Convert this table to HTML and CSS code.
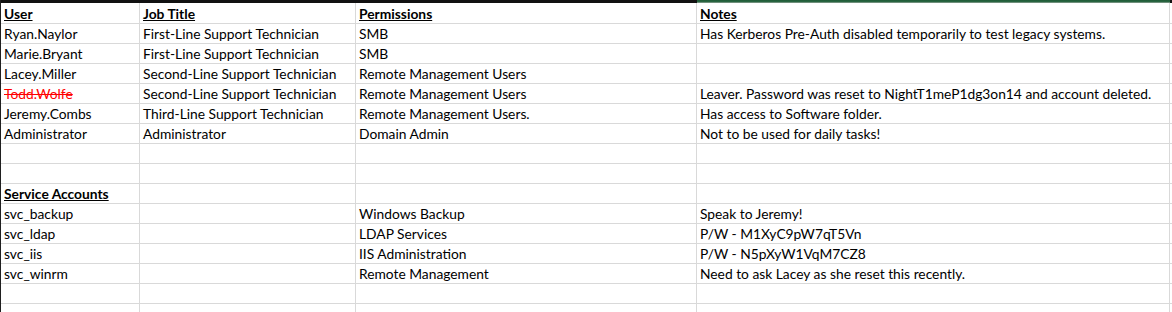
FILE: index.html
```html
<!DOCTYPE html>
<html>
<head>
<meta charset="utf-8">
<link rel="stylesheet" href="styles.css">
</head>
<body>
<div class="sheet">
  <div class="row topbar">
    <div class="bar"></div><div class="bar"></div><div class="bar"></div><div class="bar sel"></div><div class="bar"></div>
  </div>
  <div class="row head">
    <div class="c"><span class="h">User</span></div><div class="c"><span class="h">Job Title</span></div><div class="c"><span class="h">Permissions</span></div><div class="c"><span class="h">Notes</span></div><div class="c"></div>
  </div>
  <div class="row"><div class="c">Ryan.Naylor</div><div class="c">First-Line Support Technician</div><div class="c">SMB</div><div class="c">Has Kerberos Pre-Auth disabled temporarily to test legacy systems.</div><div class="c"></div></div>
  <div class="row"><div class="c">Marie.Bryant</div><div class="c">First-Line Support Technician</div><div class="c">SMB</div><div class="c"></div><div class="c"></div></div>
  <div class="row"><div class="c">Lacey.Miller</div><div class="c">Second-Line Support Technician</div><div class="c">Remote Management Users</div><div class="c"></div><div class="c"></div></div>
  <div class="row"><div class="c"><span class="struck">Todd.Wolfe</span></div><div class="c">Second-Line Support Technician</div><div class="c">Remote Management Users</div><div class="c">Leaver. Password was reset to NightT1meP1dg3on14 and account deleted.</div><div class="c"></div></div>
  <div class="row"><div class="c">Jeremy.Combs</div><div class="c">Third-Line Support Technician</div><div class="c">Remote Management Users.</div><div class="c">Has access to Software folder.</div><div class="c"></div></div>
  <div class="row"><div class="c">Administrator</div><div class="c">Administrator</div><div class="c">Domain Admin</div><div class="c">Not to be used for daily tasks!</div><div class="c"></div></div>
  <div class="row"><div class="c"></div><div class="c"></div><div class="c"></div><div class="c"></div><div class="c"></div></div>
  <div class="row"><div class="c"></div><div class="c"></div><div class="c"></div><div class="c"></div><div class="c"></div></div>
  <div class="row"><div class="c"><span class="h">Service Accounts</span></div><div class="c"></div><div class="c"></div><div class="c"></div><div class="c"></div></div>
  <div class="row"><div class="c">svc_backup</div><div class="c"></div><div class="c">Windows Backup</div><div class="c">Speak to Jeremy!</div><div class="c"></div></div>
  <div class="row"><div class="c">svc_ldap</div><div class="c"></div><div class="c">LDAP Services</div><div class="c">P/W - M1XyC9pW7qT5Vn</div><div class="c"></div></div>
  <div class="row"><div class="c">svc_iis</div><div class="c"></div><div class="c">IIS Administration</div><div class="c">P/W - N5pXyW1VqM7CZ8</div><div class="c"></div></div>
  <div class="row"><div class="c">svc_winrm</div><div class="c"></div><div class="c">Remote Management</div><div class="c">Need to ask Lacey as she reset this recently.</div><div class="c"></div></div>
  <div class="row"><div class="c"></div><div class="c"></div><div class="c"></div><div class="c"></div><div class="c"></div></div>
  <div class="row"><div class="c"></div><div class="c"></div><div class="c"></div><div class="c"></div><div class="c"></div></div>
</div>
</body>
</html>
```
FILE: styles.css
```css
html, body {
  margin: 0;
  padding: 0;
  background: #ffffff;
}
body {
  width: 1172px;
  height: 312px;
  overflow: hidden;
  font-family: Lato, "Liberation Sans", sans-serif;
  font-size: 13.8px;
  color: #000000;
}
.sheet {
  border-left: 1px solid #1f1f1f;
}
.row {
  display: grid;
  grid-template-columns: 139px 216px 341px 473px 1fr;
}
.topbar {
  height: 3px;
}
.bar {
  background: #111111;
}
.bar.sel {
  background: linear-gradient(#1f5a36 0, #2b6843 2px, #6f8f7b 2px);
}
.c {
  height: 19px;
  line-height: 20px;
  border-right: 1px solid #d9d9d9;
  border-bottom: 1px solid #d9d9d9;
  padding: 0 0 0 3px;
  white-space: nowrap;
  overflow: visible;
}
.head .c {
  height: 20px;
  line-height: 22px;
}
.h {
  font-weight: 700;
  text-decoration: underline;
}
.struck {
  color: #ff0000;
  text-decoration: line-through;
}
```
